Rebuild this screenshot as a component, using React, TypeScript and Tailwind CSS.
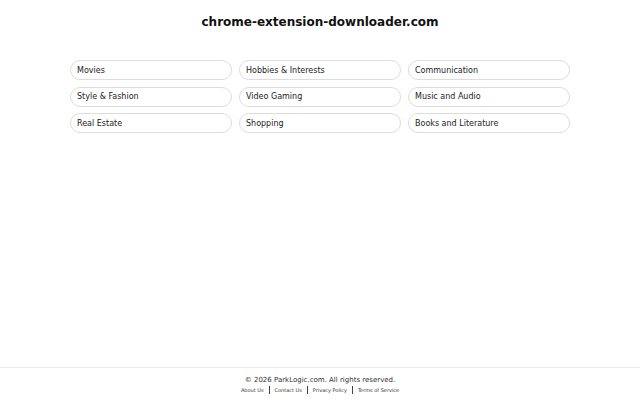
const categories = [
  'Movies',
  'Hobbies & Interests',
  'Communication',
  'Style & Fashion',
  'Video Gaming',
  'Music and Audio',
  'Real Estate',
  'Shopping',
  'Books and Literature',
]

const links = ['About Us', 'Contact Us', 'Privacy Policy', 'Terms of Service']

export default function App() {
  return (
    <div className="flex h-[400px] flex-col bg-white font-['DejaVu_Sans',sans-serif] text-[#222]">
      <main className="flex-1">
        <h1 className="pt-[14px] text-center text-[12px] font-bold leading-[16px] text-[#111]">
          chrome-extension-downloader.com
        </h1>

        <div className="mx-auto mt-[30px] grid w-[500px] grid-cols-3 gap-x-[7px] gap-y-[6.5px]">
          {categories.map((c) => (
            <a
              key={c}
              href="#"
              className="flex h-[20px] items-center rounded-full border border-[#dcdcdc] px-[6px] pt-px text-[8px] text-[#222]"
            >
              {c}
            </a>
          ))}
        </div>
      </main>

      <footer className="border-t border-[#ececec] pb-[6px] pt-[8px] text-center">
        <p className="text-[7px] leading-[9px] text-[#333]">
          © 2026 ParkLogic.com. All rights reserved.
        </p>
        <div className="mt-[1px] flex items-center justify-center text-[5px] leading-[8px] text-[#333]">
          {links.map((l, i) => (
            <span key={l} className="flex items-center">
              {i > 0 && <span className="mx-[5px] h-[8px] w-px bg-[#444]" />}
              <a href="#">{l}</a>
            </span>
          ))}
        </div>
      </footer>
    </div>
  )
}
